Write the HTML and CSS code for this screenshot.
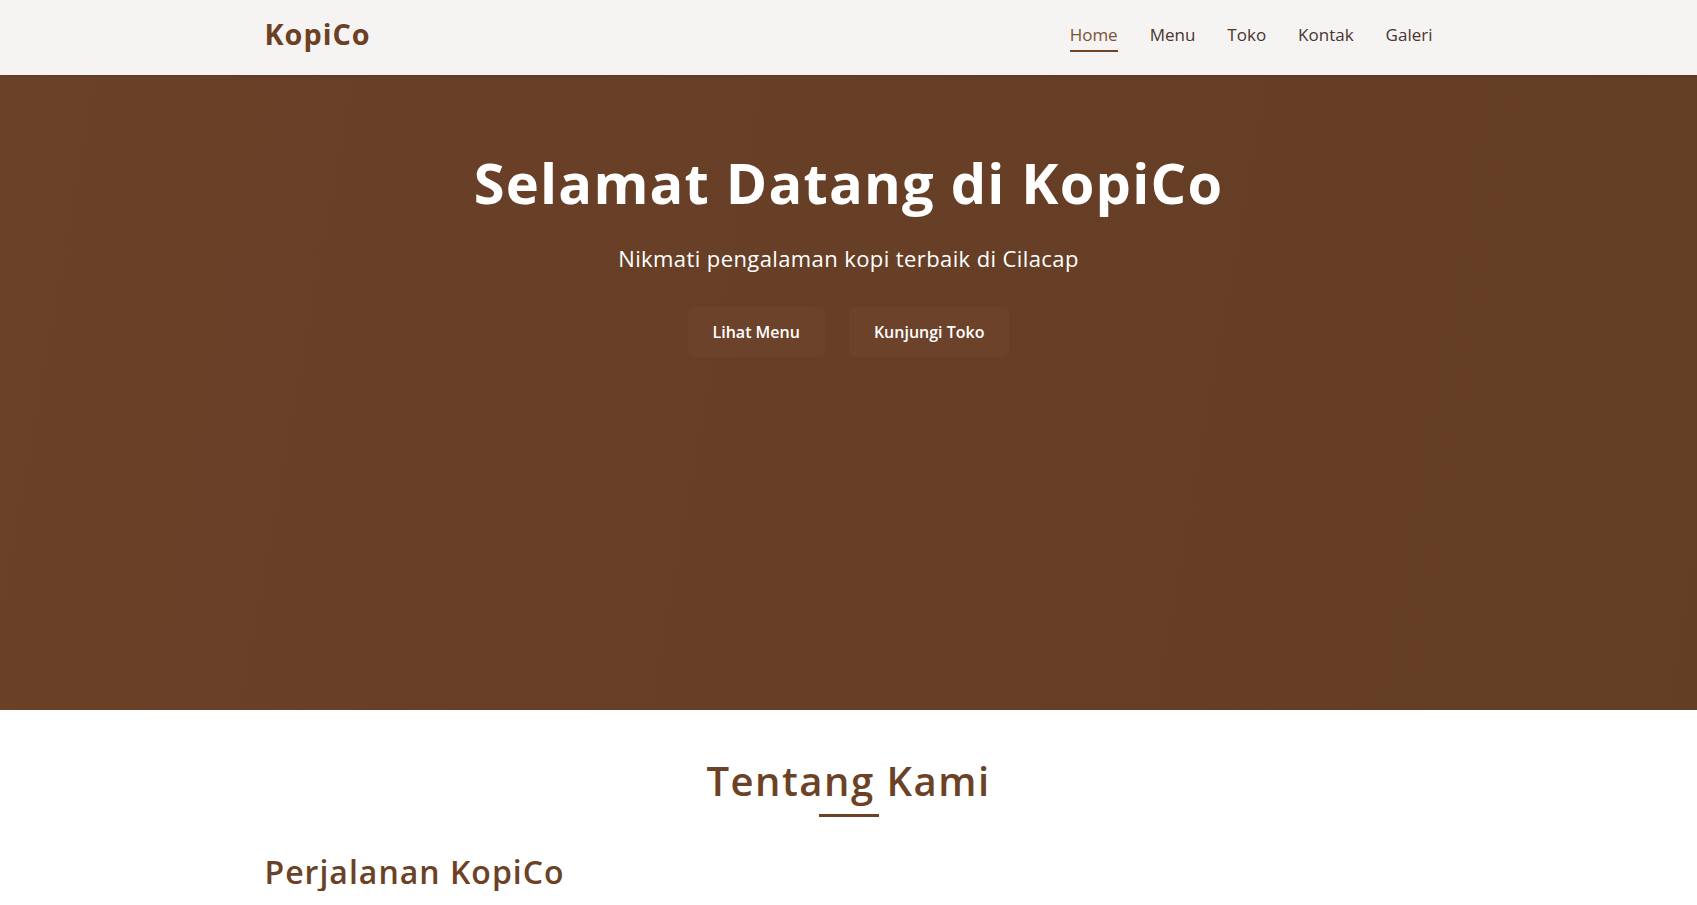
FILE: index.html
```html
<!DOCTYPE html>
<html lang="id">
<head>
<meta charset="utf-8">
<title>KopiCo</title>
<link rel="stylesheet" href="styles.css">
</head>
<body>
<header class="site-header">
  <div class="container header-inner">
    <a class="logo" href="#">KopiCo</a>
    <nav class="nav">
      <a class="nav-link active" href="#">Home</a>
      <a class="nav-link" href="#">Menu</a>
      <a class="nav-link" href="#">Toko</a>
      <a class="nav-link" href="#">Kontak</a>
      <a class="nav-link" href="#">Galeri</a>
    </nav>
  </div>
</header>
<section class="hero">
  <div class="hero-content">
    <h1 class="hero-title">Selamat Datang di KopiCo</h1>
    <p class="hero-sub">Nikmati pengalaman kopi terbaik di Cilacap</p>
    <div class="hero-buttons">
      <a class="btn btn-menu" href="#">Lihat Menu</a>
      <a class="btn btn-toko" href="#">Kunjungi Toko</a>
    </div>
  </div>
</section>
<section class="about">
  <div class="container">
    <h2 class="section-title">Tentang Kami</h2>
    <h3 class="about-heading">Perjalanan KopiCo</h3>
  </div>
</section>
</body>
</html>
```
FILE: styles.css
```css
* { box-sizing: border-box; }
body {
  margin: 0;
  font-family: "Open Sans", "Liberation Sans", sans-serif;
  background: #ffffff;
  color: #3e2723;
}
a { text-decoration: none; }
.container {
  max-width: 1200px;
  margin: 0 auto;
  padding: 0 16px;
}
.site-header {
  background: #f5f4f2;
  height: 75px;
  box-shadow: 0 1px 3px rgba(0,0,0,0.1);
  position: relative;
  z-index: 2;
}
.header-inner {
  height: 75px;
  display: flex;
  align-items: center;
  justify-content: space-between;
}
.logo {
  font-size: 28.8px;
  font-weight: 700;
  line-height: 1;
  color: #6b4023;
  letter-spacing: 1px;
  margin-top: -7px;
}
.nav {
  display: flex;
  gap: 32px;
}
.nav-link {
  font-size: 17px;
  font-weight: 400;
  line-height: 24px;
  color: #4b3530;
  padding-bottom: 3px;
  border-bottom: 2px solid transparent;
}
.nav-link.active {
  color: #7b5238;
  border-bottom-color: #6f4526;
}
.hero {
  height: 635px;
  background: linear-gradient(100deg, #6b4128 0%, #673f26 50%, #633d24 100%);
  display: flex;
  justify-content: center;
  padding-top: 74px;
}
.hero-content {
  text-align: center;
  color: #ffffff;
}
.hero-title {
  margin: 0;
  font-size: 56px;
  font-weight: 700;
  line-height: 1.2;
  letter-spacing: 1.2px;
}
.hero-sub {
  margin: 26px 0 0;
  font-size: 22px;
  font-weight: 400;
  line-height: 1.5;
  letter-spacing: 0.4px;
}
.hero-buttons {
  display: flex;
  justify-content: center;
  gap: 24px;
  margin-top: 32px;
}
.btn {
  display: inline-flex;
  align-items: center;
  justify-content: center;
  height: 50px;
  padding: 0 25px;
  border-radius: 6px;
  background: #6c432a;
  color: #ffffff;
  font-size: 16px;
  font-weight: 600;
}
.about {
  padding: 47px 0 0;
}
.section-title {
  margin: 0;
  text-align: center;
  font-size: 40px;
  font-weight: 600;
  color: #6b4226;
  line-height: 1.2;
  letter-spacing: 1.5px;
  position: relative;
  padding-bottom: 12px;
}
.section-title::after {
  content: "";
  position: absolute;
  left: 50%;
  bottom: 0;
  width: 60px;
  height: 3px;
  margin-left: -30px;
  background: #6b4226;
}
.about-heading {
  margin: 36px 0 0;
  font-size: 32px;
  font-weight: 600;
  line-height: 1.2;
  letter-spacing: 1px;
  color: #6b4226;
}
```
